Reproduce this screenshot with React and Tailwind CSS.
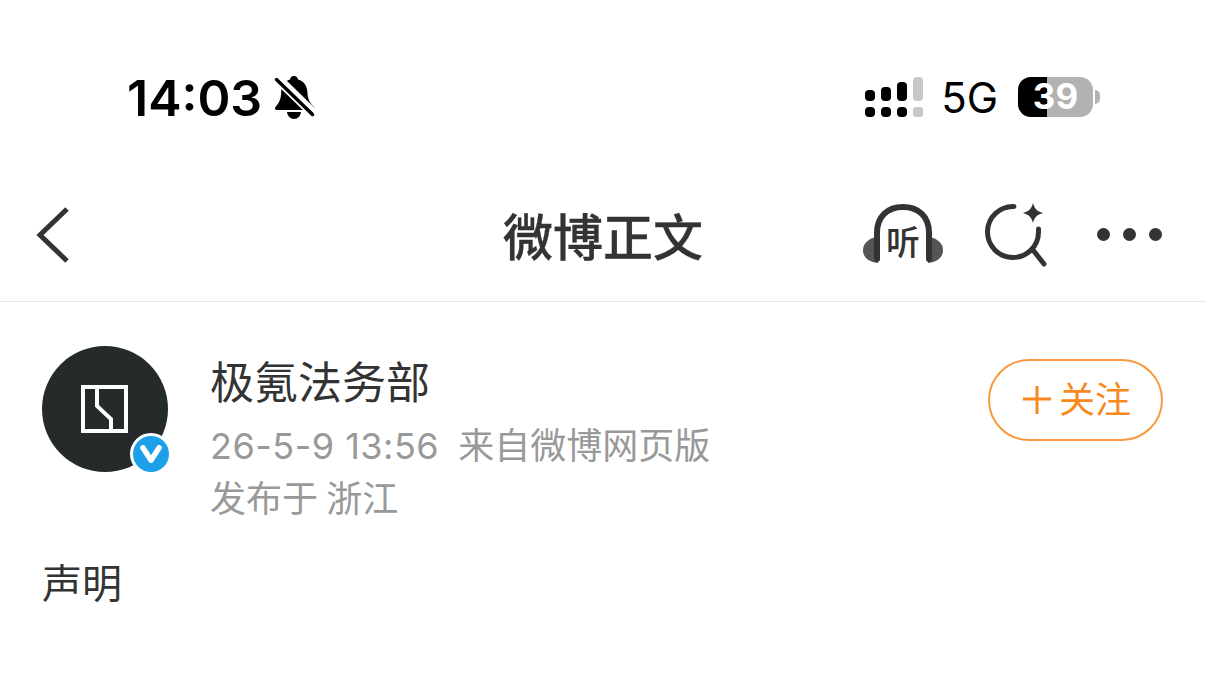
const cjk = "font-['Inter','Noto_Sans_CJK_SC',sans-serif]"

function BellOff() {
  return (
    <svg width="42" height="46" viewBox="0 0 42 46">
      <path d="M20 1c2.400 0 3.800 1.600 4 3.500 6 1.500 9 6.500 9.400 12.500.3 6 1.600 10 6.600 15 1 1.500.4 3-1.500 3H3c-2 0-2.700-1.500-1.500-3 4-4.500 5.500-8.500 5.700-15C7.400 11 10.400 6 16 4.500 16.200 2.600 17.600 1 20 1z" fill="#000" />
      <path d="M13 37h14c-.4 4-3.400 7-7 7s-6.600-3-7-7z" fill="#000" />
      <path d="M4 0l38 37" stroke="#fff" strokeWidth="4" />
      <path d="M2.500 4.500l36 35" stroke="#fff" strokeWidth="7" />
      <path d="M2.500 4.500l36 35" stroke="#000" strokeWidth="3.500" strokeLinecap="round" />
    </svg>
  )
}

function Signal() {
  return (
    <svg width="58" height="41" viewBox="0 0 58 41">
      <rect x="0" y="13" width="10" height="11" rx="4" fill="#000" />
      <rect x="16" y="10" width="10" height="14" rx="4" fill="#000" />
      <rect x="32" y="5" width="10" height="19" rx="4" fill="#000" />
      <rect x="48" y="0" width="10" height="24" rx="4" fill="#c8c8c8" />
      <rect x="0" y="30" width="10" height="10" rx="4" fill="#000" />
      <rect x="16" y="30" width="10" height="10" rx="4" fill="#000" />
      <rect x="32" y="30" width="10" height="10" rx="4" fill="#000" />
      <rect x="48" y="30" width="10" height="10" rx="3" fill="#c8c8c8" />
    </svg>
  )
}

function Battery() {
  return (
    <div className="mb-[2px] flex items-center gap-[2px]">
      <div className="relative flex h-[40px] w-[75px] overflow-hidden rounded-[13px] bg-[#b2b2b2]">
        <div className="h-full w-[29px] bg-black" />
        <span className="absolute inset-0 flex items-center justify-center font-['Inter',sans-serif] text-[35px] font-bold leading-none text-white">39</span>
      </div>
      <div className="h-[14px] w-[5px] rounded-r-full bg-[#b2b2b2]" />
    </div>
  )
}

function Headphones() {
  return (
    <div className="relative mb-[2px] h-[60px] w-[80px] shrink-0">
      <svg width="80" height="60" viewBox="0 0 80 60">
        <path d="M15 33C5 34 0 40 0 46c0 7 5 12 15 13z" fill="#555" />
        <path d="M65 33c10 1 15 7 15 13 0 7-5 12-15 13z" fill="#555" />
        <path d="M14 55V29C14 12 25 3 40 3s26 9 26 26v26" fill="none" stroke="#333" strokeWidth="6" strokeLinecap="round" />
      </svg>
      <span className="absolute left-[23px] top-[19px] text-[34px] font-medium leading-[40px] text-[#333]">听</span>
    </div>
  )
}

function AiSearch() {
  return (
    <svg width="64" height="64" viewBox="0 0 64 64" className="shrink-0">
      <path d="M31 3.500A25.500 25.500 0 1 0 55.500 29V26" fill="none" stroke="#333" strokeWidth="5" strokeLinecap="round" />
      <path d="M50 47l11 14" stroke="#333" strokeWidth="5" strokeLinecap="round" />
      <path d="M50 0c1.500 5.500 4 8.500 10 10-6 1.500-8.500 4.500-10 10-1.500-5.500-4-8.500-10-10 6-1.500 8.500-4.500 10-10z" fill="#333" />
    </svg>
  )
}

function Logo() {
  return (
    <svg width="48" height="48" viewBox="0 0 48 48">
      <rect x="2" y="2" width="43" height="44" fill="none" stroke="#fff" strokeWidth="4" />
      <path d="M16 3v18l14 13v13" fill="none" stroke="#fff" strokeWidth="4" />
    </svg>
  )
}

export default function App() {
  return (
    <div className={`h-[678px] w-[1206px] overflow-hidden bg-white ${cjk}`}>
      <div className="flex h-[195px] items-start justify-between pl-[127px] pr-[106px] pt-[77px]">
        <div className="flex h-[41px] items-center gap-[12px]">
          <span className="font-['Inter',sans-serif] text-[50px] font-semibold leading-none text-black">14:03</span>
          <BellOff />
        </div>
        <div className="flex h-[41px] items-center">
          <Signal />
          <span className="ml-[18px] mr-[20px] font-['Inter',sans-serif] text-[42px] font-normal leading-none text-black">5G</span>
          <Battery />
        </div>
      </div>

      <div className="relative flex h-[107px] items-center justify-between border-b border-[#e6e6e6] pb-[24px] pl-[36px] pr-[44px]">
        <svg width="34" height="56" viewBox="0 0 34 56" className="mb-[2px] shrink-0">
          <path d="M31 2L4 28l27 26" fill="none" stroke="#333" strokeWidth="5" />
        </svg>
        <span className="absolute left-0 right-0 top-[8px] text-center text-[50px] font-medium leading-[70px] text-[#333] [-webkit-text-stroke:0.3px_#333]">微博正文</span>
        <div className="mb-[3px] flex items-center">
          <Headphones />
          <div className="ml-[40px]"><AiSearch /></div>
          <div className="ml-[50px] flex gap-[13px]">
            <div className="size-[13px] rounded-full bg-[#333]" />
            <div className="size-[13px] rounded-full bg-[#333]" />
            <div className="size-[13px] rounded-full bg-[#333]" />
          </div>
        </div>
      </div>

      <div className="flex items-start justify-between pl-[42px] pr-[43px] pt-[44px]">
        <div className="flex items-start">
          <div className="relative flex size-[126px] shrink-0 items-center justify-center rounded-full bg-[#252b2b]">
            <Logo />
            <div className="absolute bottom-[-3px] right-[-4px] flex size-[42px] items-center justify-center rounded-full border-[3px] border-white bg-[#1d9fea]">
              <svg width="22" height="18" viewBox="0 0 24 20">
                <path d="M3 3l9 14 9-14" fill="none" stroke="#fff" strokeWidth="6" strokeLinejoin="round" strokeLinecap="round" />
              </svg>
            </div>
          </div>
          <div className="ml-[42px] flex flex-col">
            <span className="mt-[5px] text-[44px] leading-[64px] text-[#333]">极氪法务部</span>
            <span className="mt-[6px] text-[36px] leading-[50px] text-[#999]"><span className="tracking-[0.5px]">26-5-9 13:56</span><span className="ml-[19px]">来自微博网页版</span></span>
            <span className="mt-[3px] text-[36px] leading-[50px] text-[#999] [word-spacing:-2px]">发布于 浙江</span>
          </div>
        </div>
        <div className="mt-[13px] flex h-[82px] w-[175px] items-center justify-center gap-[7px] rounded-full border-2 border-[#f8993f] pl-[2px]">
          <svg width="30" height="30" viewBox="0 0 30 30">
            <path d="M15 1v28M1 14h28" stroke="#f7891f" strokeWidth="3" />
          </svg>
          <span className="text-[36px] leading-none text-[#f7891f]">关注</span>
        </div>
      </div>

      <p className="pl-[42px] pt-[31px] text-[40px] leading-[58px] text-[#333]">声明</p>
    </div>
  )
}
